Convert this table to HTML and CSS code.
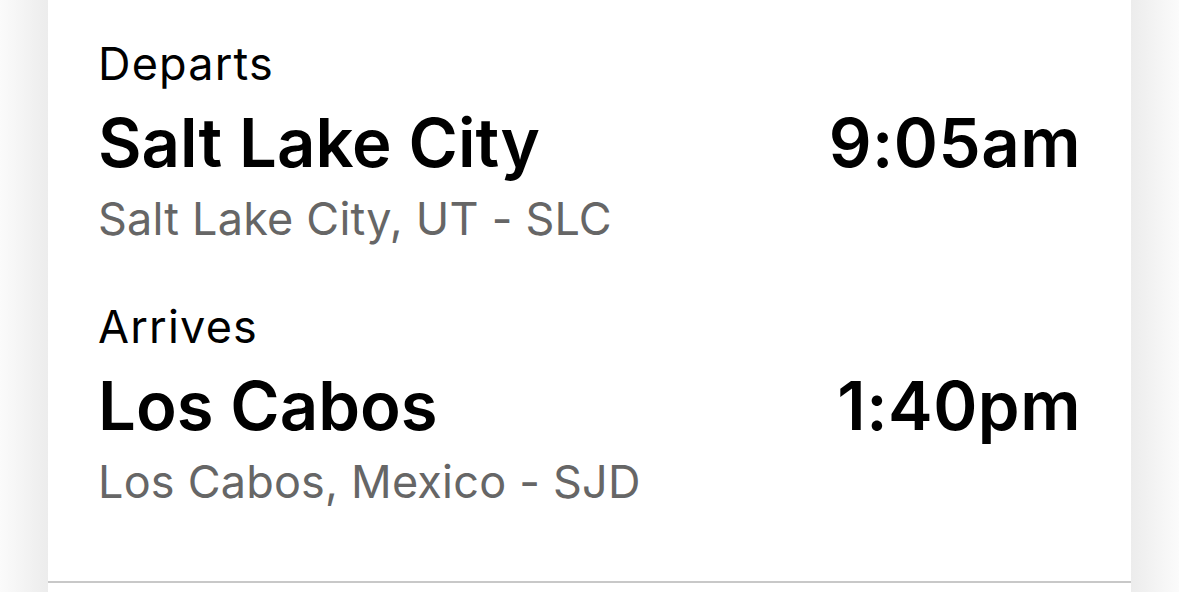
FILE: index.html
```html
<!DOCTYPE html>
<html lang="en">
<head>
    <meta charset="UTF-8">
    <meta name="viewport" content="width=device-width, initial-scale=1.0">
    <title>Flight</title>
    <link rel="stylesheet" href="styles.css">
</head>
<body>
    <div class="card">
        <div class="leg">
            <div class="label">Departs</div>
            <div class="row">
                <span class="city">Salt Lake City</span>
                <span class="time">9:05am</span>
            </div>
            <div class="airport">Salt Lake City, UT - SLC</div>
        </div>
        <div class="leg">
            <div class="label">Arrives</div>
            <div class="row">
                <span class="city">Los Cabos</span>
                <span class="time">1:40pm</span>
            </div>
            <div class="airport">Los Cabos, Mexico - SJD</div>
        </div>
        <div class="divider"></div>
    </div>
</body>
</html>
```

FILE: styles.css
```css
body {
    margin: 0;
    height: 100vh;
    overflow: hidden;
    background: linear-gradient(to right, #fbfbfb, #ececec 48px, #ececec 1131px, #fbfbfb);
    font-family: Inter, "Noto Sans", sans-serif;
    color: #000;
}
.card {
    margin: 0 48px;
    height: 100%;
    background: #fff;
    padding-top: 38px;
    box-sizing: border-box;
}
.leg {
    padding: 0 50px 0 50px;
}
.leg + .leg {
    margin-top: 56px;
}
.label {
    font-size: 45px;
    line-height: 52px;
    letter-spacing: 1.2px;
}
.row {
    display: flex;
    justify-content: space-between;
    margin-top: 15px;
    font-size: 67px;
    line-height: 76px;
    font-weight: 600;
}
.time {
    letter-spacing: 0.5px;
}
.airport {
    margin-top: 12px;
    font-size: 45px;
    line-height: 52px;
    letter-spacing: 0.2px;
    color: #666;
}
.divider {
    margin-top: 73px;
    border-top: 2px solid #c8c8c8;
}
```
